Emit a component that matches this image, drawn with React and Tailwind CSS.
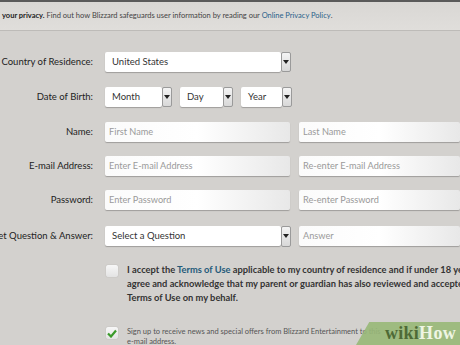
import React from "react";

const font = { fontFamily: 'Lato, "Liberation Sans", sans-serif' };

function Arrow({ h = "h-[20px]" }) {
  return (
    <div className={`w-[10px] ${h} flex items-center justify-center border border-[#9a9a9a] rounded-[2px] bg-gradient-to-b from-[#f4f4f4] to-[#d8d8d8]`}>
      <svg width="6" height="4" viewBox="0 0 6 4"><path d="M0 0 L6 0 L3 4 Z" fill="#222" /></svg>
    </div>
  );
}

function Select({ w, text }) {
  return (
    <div className="flex items-center h-[20px]" style={{ width: w }}>
      <div className="flex-1 h-[20px] bg-white rounded-[2px] shadow-[0_1px_1px_rgba(0,0,0,0.25)] flex items-center pl-[7px] text-[9.5px] text-[#333]">
        {text}
      </div>
      <Arrow />
    </div>
  );
}

function Input({ w, ph, grow }) {
  return (
    <div
      className={`h-[20px] rounded-[2px] shadow-[0_1px_1px_rgba(0,0,0,0.25)] bg-gradient-to-r from-[#fbfbfb] via-[#ffffff] to-[#e8e8e8] flex items-center pl-[4px] text-[9.2px] text-[#9a9a9a] ${grow ? "flex-1" : ""}`}
      style={grow ? {} : { width: w }}
    >
      {ph}
    </div>
  );
}

function Label({ children }) {
  return (
    <div className="w-[94px] shrink-0 flex justify-end whitespace-nowrap text-[9.5px] text-[#222] pr-[1px]">
      {children}
    </div>
  );
}

export default function App() {
  return (
    <div className="w-[460px] h-[345px] overflow-hidden bg-[#d3d1ce] relative" style={font}>
      <div className="h-[2px] bg-[#5a5a5a]" />
      <div className="h-[29px] bg-gradient-to-b from-[#d9d7d4] to-[#e0dedb] flex items-center pl-[2px] text-[7.5px] text-[#444] whitespace-nowrap border-b border-[#bdbbb8]">
        <span className="font-bold text-[#222]">your privacy.</span>
        <span>&nbsp;Find out how Blizzard safeguards user information by reading our&nbsp;</span>
        <span className="text-[#2a5f8a]">Online Privacy Policy</span>
        <span>.</span>
      </div>

      <div className="flex flex-col">
        <div className="flex items-center mt-[21px] h-[20px]">
          <Label>Country of Residence:</Label>
          <div className="ml-[11px]"><Select w="186px" text="United States" /></div>
        </div>
        <div className="flex items-center mt-[15px] h-[20px]">
          <Label>Date of Birth:</Label>
          <div className="ml-[11px] flex gap-[8px]">
            <Select w="67px" text="Month" />
            <Select w="53px" text="Day" />
            <Select w="51px" text="Year" />
          </div>
        </div>
        <div className="flex items-center mt-[15px] h-[20px]">
          <Label>Name:</Label>
          <div className="ml-[11px] flex gap-[9px] flex-1">
            <Input w="185px" ph="First Name" />
            <Input grow ph="Last Name" />
          </div>
        </div>
        <div className="flex items-center mt-[14px] h-[20px]">
          <Label>E-mail Address:</Label>
          <div className="ml-[11px] flex gap-[9px] flex-1">
            <Input w="185px" ph="Enter E-mail Address" />
            <Input grow ph="Re-enter E-mail Address" />
          </div>
        </div>
        <div className="flex items-center mt-[14px] h-[20px]">
          <Label>Password:</Label>
          <div className="ml-[11px] flex gap-[9px] flex-1">
            <Input w="185px" ph="Enter Password" />
            <Input grow ph="Re-enter Password" />
          </div>
        </div>
        <div className="flex items-center mt-[16px] h-[20px]">
          <Label>Secret Question &amp; Answer:</Label>
          <div className="ml-[11px] flex gap-[8px] flex-1 items-center">
            <div className="flex items-center w-[186px]">
              <div className="flex-1 h-[20px] bg-white rounded-[2px] shadow-[0_1px_1px_rgba(0,0,0,0.25)] flex items-center pl-[7px] text-[9.5px] text-[#333]">Select a Question</div>
              <Arrow h="h-[21px]" />
            </div>
            <Input grow ph="Answer" />
          </div>
        </div>

        <div className="flex mt-[17px] pl-[106px]">
          <div className="w-[12px] h-[12px] shrink-0 mt-[2px] rounded-[2px] bg-gradient-to-b from-[#f7f7f7] to-[#e3e3e3] shadow-[0_0_1px_rgba(0,0,0,0.3)]" />
          <div className="ml-[9px] text-[9.3px] leading-[14px] font-bold text-[#333] whitespace-nowrap">
            <div>I accept the <span className="text-[#245a7a]">Terms of Use</span> applicable to my country of residence and if under 18 years</div>
            <div>agree and acknowledge that my parent or guardian has also reviewed and accepted the</div>
            <div>Terms of Use on my behalf.</div>
          </div>
        </div>

        <div className="flex mt-[22px] pl-[106px]">
          <div className="w-[12px] h-[12px] shrink-0 rounded-[2px] bg-gradient-to-b from-[#f7f7f7] to-[#e3e3e3] shadow-[0_0_1px_rgba(0,0,0,0.3)] flex items-center justify-center">
            <svg width="10" height="9" viewBox="0 0 10 9"><path d="M1 4.5 L4 7.5 L9 1.5" stroke="#3a9a2a" strokeWidth="2.2" fill="none" /></svg>
          </div>
          <div className="ml-[9px] text-[7.5px] leading-[10px] text-[#555] whitespace-nowrap">
            <div>Sign up to receive news and special offers from Blizzard Entertainment to this</div>
            <div>e-mail address.</div>
          </div>
        </div>
      </div>

      <div className="absolute right-[-12px] bottom-0 w-[116px] h-[23px] bg-[#98b878]/90 [transform:skewX(-30deg)] origin-bottom" />
      <div className="absolute right-[4px] bottom-[2px] h-[20px] flex items-center text-[18px] font-bold tracking-[0.3px]" style={{ fontFamily: '"Liberation Serif", serif' }}>
        <span className="text-[#4e6a36]">wiki</span><span className="text-[#eef5e4]">How</span>
      </div>
    </div>
  );
}
